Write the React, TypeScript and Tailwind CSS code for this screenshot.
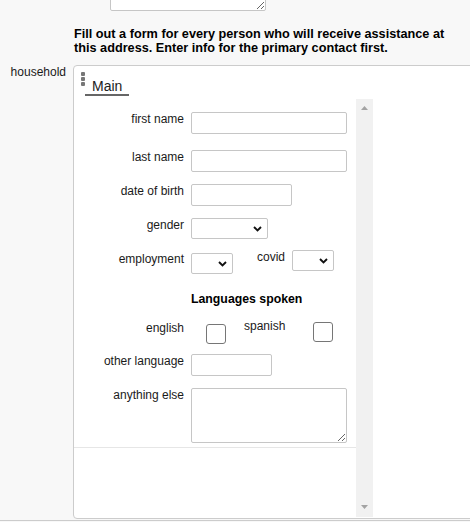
import React from "react";

const Chevron = () => (
  <svg width="9" height="6" viewBox="0 0 9 6" className="shrink-0">
    <path d="M1 1 L4.5 4.5 L8 1" fill="none" stroke="#111" strokeWidth="1.9" />
  </svg>
);

const Label = ({ text, className }: { text: string; className?: string }) => (
  <label className={"w-[117px] shrink-0 pr-[7px] text-right text-[12px] leading-[14px] " + (className || "")}>
    {text}
  </label>
);

const App = () => {
  return (
    <div className="h-[522px] w-[470px] overflow-hidden bg-[#f8f8f8] font-['Liberation_Sans',Arial,sans-serif] text-[#1a1a1a]">
      {/* textarea from the previous section, mostly scrolled off */}
      <div className="flex h-[11px] items-end overflow-hidden pl-[110px]">
        <textarea readOnly className="block h-[40px] w-[156px] shrink-0 rounded-[2px] border border-[#c6c6c6] bg-white" />
      </div>

      <p className="mt-[17px] pl-[74px] pr-[10px] text-[12.7px] font-bold leading-[13.5px] text-black">
        Fill out a form for every person who will receive assistance at this address. Enter info for the primary contact first.
      </p>

      <div className="mt-[10px] flex items-start">
        <div className="w-[73px] shrink-0 pr-[7px] text-right text-[12px] leading-[14px]">household</div>
        <div className="h-[454px] w-[430px] shrink-0 rounded-[4px] border border-[#cccccc] bg-white">
          {/* tab header */}
          <div className="flex h-[30px] items-start pl-[7px] pt-[6px]">
            <div className="flex flex-col gap-[1px]">
              <span className="h-[4px] w-[4px] rounded-[1px] bg-[#777]" />
              <span className="h-[4px] w-[4px] rounded-[1px] bg-[#777]" />
              <span className="h-[4px] w-[4px] rounded-[1px] bg-[#777]" />
            </div>
            <div className="mt-[6px] border-b-2 border-[#666] px-[7px] text-[14px] leading-[16px] text-[#222]">Main</div>
          </div>

          {/* scrolling form */}
          <div className="mt-[3px] flex h-[418px] w-[299px]">
            <div className="flex w-[282px] shrink-0 flex-col pt-[13px]">
              <div className="flex items-start">
                <Label text="first name" />
                <div className="h-[22px] w-[156px] rounded-[2px] border border-[#c6c6c6] bg-white" />
              </div>
              <div className="mt-[16px] flex items-start">
                <Label text="last name" />
                <div className="h-[22px] w-[156px] rounded-[2px] border border-[#c6c6c6] bg-white" />
              </div>
              <div className="mt-[12px] flex items-start">
                <Label text="date of birth" />
                <div className="h-[22px] w-[101px] rounded-[2px] border border-[#c6c6c6] bg-white" />
              </div>
              <div className="mt-[12px] flex items-start">
                <Label text="gender" />
                <div className="flex h-[21px] w-[77px] items-center justify-end rounded-[2px] border border-[#c6c6c6] bg-white pr-[5px]">
                  <Chevron />
                </div>
              </div>
              <div className="mt-[14px] flex items-start">
                <Label text="employment" className="-mt-[1px]" />
                <div className="flex h-[21px] w-[42px] items-center justify-end rounded-[2px] border border-[#c6c6c6] bg-white pr-[5px]">
                  <Chevron />
                </div>
                <div className="-mt-[3px] ml-[24px] flex items-start">
                  <span className="mr-[7px] text-[12px] leading-[14px]">covid</span>
                  <div className="flex h-[21px] w-[42px] items-center justify-end rounded-[2px] border border-[#c6c6c6] bg-white pr-[5px]">
                    <Chevron />
                  </div>
                </div>
              </div>

              <div className="mt-[18px] pl-[117px] text-[12.3px] font-bold leading-[14px] text-black">Languages spoken</div>

              <div className="mt-[13px] flex items-start">
                <Label text="english" className="mt-[2px]" />
                <span className="ml-[15px] mt-[5px] h-[20px] w-[20px] shrink-0 rounded-[3px] border border-[#767676] bg-white" />
                <span className="ml-[18px] text-[12px] leading-[14px]">spanish</span>
                <span className="ml-[28px] mt-[3px] h-[20px] w-[20px] shrink-0 rounded-[3px] border border-[#767676] bg-white" />
              </div>

              <div className="mt-[10px] flex items-start">
                <Label text="other language" />
                <div className="h-[22px] w-[81px] rounded-[2px] border border-[#c6c6c6] bg-white" />
              </div>
              <div className="mt-[12px] flex items-start">
                <Label text="anything else" />
                <textarea readOnly className="block h-[55px] w-[156px] rounded-[2px] border border-[#c6c6c6] bg-white" />
              </div>
              <div className="mt-[4px] h-px w-full bg-[#e6e6e6]" />
            </div>

            {/* scrollbar */}
            <div className="flex w-[17px] shrink-0 flex-col items-center justify-between bg-[#f1f1f1] pb-[8px] pt-[7px]">
              <svg width="7" height="4" viewBox="0 0 7 4">
                <polygon points="0,4 7,4 3.5,0" fill="#a3a3a3" />
              </svg>
              <svg width="7" height="4" viewBox="0 0 7 4">
                <polygon points="0,0 7,0 3.5,4" fill="#a3a3a3" />
              </svg>
            </div>
          </div>
        </div>
      </div>
      <div className="mt-[1px] h-[4px] border-t border-[#cccccc]" />
    </div>
  );
};

export default App;
